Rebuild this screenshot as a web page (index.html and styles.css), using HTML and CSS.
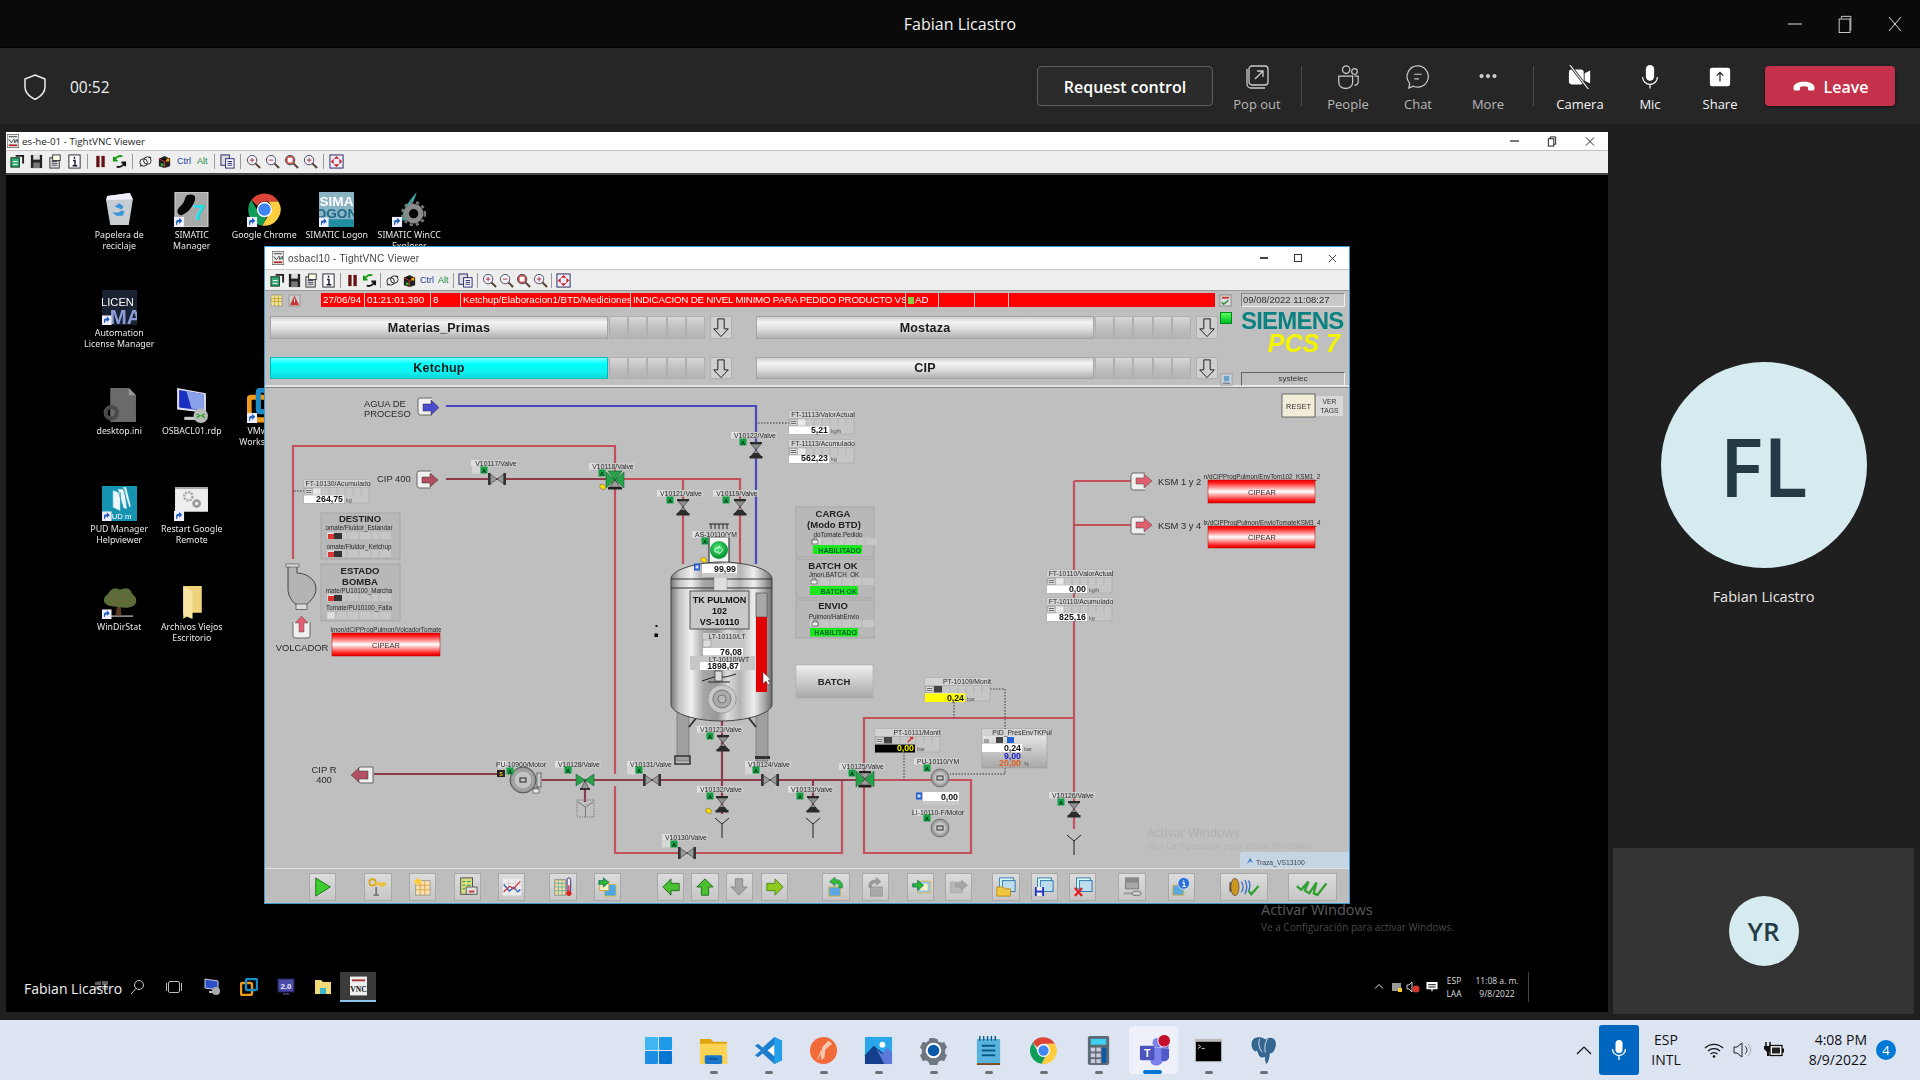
FILE: index.html
```html
<!DOCTYPE html>
<html lang="en">
<head>
<meta charset="utf-8">
<title>Fabian Licastro</title>
<link rel="stylesheet" href="styles.css">
</head>
<body>
<svg class="sprite" width="0" height="0" aria-hidden="true">
  <defs>
    <symbol id="chrome" viewBox="0 0 48 48">
      <path d="M24 2a22 22 0 0 1 19 11H24a11 11 0 0 0-10 6L6 11A22 22 0 0 1 24 2z" fill="#db4437"/>
      <path d="M6 11l9.500 16.500A11 11 0 0 0 27 34.600L21 46A22 22 0 0 1 6 11z" fill="#0f9d58"/>
      <path d="M43 13a22 22 0 0 1-22 33l10-17a11 11 0 0 0-2-15.900z" fill="#ffcd40"/>
      <circle cx="24" cy="24" r="10.500" fill="#fff"/><circle cx="24" cy="24" r="8.500" fill="#4285f4"/>
    </symbol>
    <symbol id="sc" viewBox="0 0 10 10">
      <rect width="10" height="10" fill="#eef"/><path d="M2 8V5q0-2 3-2V1l3 3-3 3V5q-2 0-2 3z" fill="#1f5fbf"/>
    </symbol>
    <symbol id="ti-m" viewBox="0 0 16 16"><rect x="1" y="4" width="9" height="10" fill="#3a7" stroke="#131"/><path d="M6 2h8v8" fill="none" stroke="#222" stroke-width="2"/><path d="M3 8h5M3 11h5" stroke="#fff"/></symbol>
    <symbol id="ti-s" viewBox="0 0 16 16"><rect x="2" y="1" width="12" height="14" fill="#222"/><rect x="4.500" y="1" width="7" height="5" fill="#ddd"/><rect x="4.500" y="9" width="7" height="6" fill="#777"/></symbol>
    <symbol id="ti-o" viewBox="0 0 16 16"><rect x="2" y="4" width="10" height="11" fill="#ddd" stroke="#333"/><rect x="5" y="1" width="8" height="6" fill="#ffe" stroke="#333"/><path d="M4 8h6M4 10h6M4 12h6" stroke="#446"/></symbol>
    <symbol id="ti-i" viewBox="0 0 16 16"><rect x="2" y="1" width="12" height="14" fill="#fff" stroke="#223"/><path d="M8 3v2M6.500 7H8.500v5M6 12.500h5" stroke="#113" stroke-width="1.500" fill="none"/></symbol>
    <symbol id="ti-p" viewBox="0 0 16 16"><rect x="3.500" y="2" width="3.500" height="12" fill="#611"/><rect x="9" y="2" width="3.500" height="12" fill="#611"/></symbol>
    <symbol id="ti-r" viewBox="0 0 16 16"><path d="M11 2.500a6 5 0 0 0-8 4M2 3v4h4" fill="none" stroke="#191" stroke-width="2"/><path d="M5 13.500a6 5 0 0 0 8-4M14 13V9h-4" fill="none" stroke="#111" stroke-width="2"/></symbol>
    <symbol id="ti-c" viewBox="0 0 16 16"><circle cx="6" cy="9" r="4" fill="#eee" stroke="#222"/><circle cx="10" cy="7" r="4" fill="none" stroke="#222"/><path d="M2 13l3-1M12 3l2 1" stroke="#222"/></symbol>
    <symbol id="ti-f" viewBox="0 0 16 16"><path d="M2 5l6-3 6 3v8l-6 2-6-2z" fill="#222"/><path d="M2 5l6 3 6-3M8 8v7" stroke="#c33"/><path d="M4 10h3v3H4z" fill="#3a3"/><path d="M10 5h3v3h-3z" fill="#ea0"/></symbol>
    <symbol id="ti-k" viewBox="0 0 16 16"><rect x="1" y="1" width="9" height="11" fill="#ddd" stroke="#226"/><rect x="6" y="5" width="9" height="10" fill="#fff" stroke="#226"/><path d="M8 8h5M8 10h5M8 12h5" stroke="#226"/></symbol>
    <symbol id="ti-z" viewBox="0 0 16 16"><circle cx="6.500" cy="6.500" r="5" fill="#f4f4ff" stroke="#445"/><path d="M10 10l5 5" stroke="#543" stroke-width="2.200"/><path d="M4 6.500h5M6.500 4v5" stroke="#a33"/></symbol>
    <symbol id="ti-z2" viewBox="0 0 16 16"><circle cx="6.500" cy="6.500" r="5" fill="#f4f4ff" stroke="#445"/><path d="M10 10l5 5" stroke="#543" stroke-width="2.200"/><path d="M4 6.500h5" stroke="#a33"/></symbol>
    <symbol id="ti-z3" viewBox="0 0 16 16"><circle cx="6.500" cy="6.500" r="5" fill="#c55" stroke="#445"/><path d="M10 10l5 5" stroke="#543" stroke-width="2.200"/><rect x="4" y="4" width="5" height="5" fill="#fff"/></symbol>
    <symbol id="ti-x" viewBox="0 0 16 16"><rect x="1" y="1" width="14" height="14" fill="#eef" stroke="#225"/><path d="M8 2l3 3H5zM8 14l3-3H5zM2 8l3-3v6zM14 8l-3-3v6z" fill="#c22"/></symbol>
  </defs>
</svg>

<header class="titlebar">
  <span class="title">Fabian Licastro</span>
  <div class="win-ctrls">
    <svg viewBox="0 0 16 16"><path d="M1 8h14" stroke="#ddd" fill="none"/></svg>
    <svg viewBox="0 0 16 20"><rect x="1.500" y="4.500" width="12" height="15" fill="none" stroke="#ddd"/><path d="M4 4V1.500h10.500V17H14" fill="none" stroke="#ddd"/></svg>
    <svg viewBox="0 0 16 16"><path d="M2 1l12 14M14 1L2 15" stroke="#ddd" fill="none"/></svg>
  </div>
</header>

<nav class="callbar">
  <svg class="shield" viewBox="0 0 24 26"><path d="M12 1l10 4v8c0 7-6 10.500-10 12.500C8 23.500 2 20 2 13V5z" fill="none" stroke="#eee" stroke-width="1.500"/></svg>
  <span class="timer">00:52</span>
  <button class="req">Request control</button>
  <div class="cb"><svg viewBox="0 0 24 24"><rect x="4" y="1" width="19" height="19" rx="3" fill="none" stroke="#ccc" stroke-width="1.300"/><path d="M2 4v15a4 4 0 0 0 4 4h14" fill="none" stroke="#ccc" stroke-width="1.300"/><path d="M10 14l8-8M12 6h6v6" fill="none" stroke="#ccc" stroke-width="1.300"/></svg><span>Pop out</span></div>
  <i class="sep"></i>
  <div class="cb"><svg viewBox="0 0 26 26"><circle cx="11" cy="5" r="4" fill="none" stroke="#ccc" stroke-width="1.300"/><circle cx="20" cy="7" r="3" fill="none" stroke="#ccc" stroke-width="1.300"/><path d="M3 12h15v7a7 6 0 0 1-15 0z" fill="none" stroke="#ccc" stroke-width="1.300"/><path d="M20 12h4v5a4 4 0 0 1-4 5" fill="none" stroke="#ccc" stroke-width="1.300"/></svg><span>People</span></div>
  <div class="cb"><svg viewBox="0 0 26 26"><path d="M13 1a11.500 11.500 0 1 1-5 22l-5 2 1-5A11.500 11.500 0 0 1 13 1z" fill="none" stroke="#ccc" stroke-width="1.300"/><path d="M9 10h8M9 15h5" stroke="#ccc" stroke-width="1.300"/></svg><span>Chat</span></div>
  <div class="cb"><svg viewBox="0 0 26 26"><circle cx="6" cy="12" r="2.300" fill="#ccc"/><circle cx="13" cy="12" r="2.300" fill="#ccc"/><circle cx="20" cy="12" r="2.300" fill="#ccc"/></svg><span>More</span></div>
  <i class="sep sep2"></i>
  <div class="cb on"><svg viewBox="0 0 26 26"><rect x="1" y="5" width="16" height="16" rx="3" fill="#fff"/><path d="M18 9l6-3v14l-6-3z" fill="#fff"/><path d="M2 0l20 26" stroke="#252525" stroke-width="3"/><path d="M2 0l20 26" stroke="#fff" stroke-width="1.200"/></svg><span>Camera</span></div>
  <div class="cb on"><svg viewBox="0 0 26 26"><rect x="8.500" y="0" width="9" height="17" rx="4.500" fill="#fff"/><path d="M5 13a8 8 0 0 0 16 0M13 21v4.500" fill="none" stroke="#fff" stroke-width="1.300"/></svg><span>Mic</span></div>
  <div class="cb on"><svg viewBox="0 0 26 26"><rect x="2" y="3" width="22" height="20" rx="2.500" fill="#fff"/><path d="M13 18V8M9.500 11.500L13 8l3.500 3.500" fill="none" stroke="#222" stroke-width="1.300"/></svg><span>Share</span></div>
  <button class="leave"><svg viewBox="0 0 26 16"><path d="M1 9c0-5 6-7 12-7s12 2 12 7c0 2-1 3-2 3h-4c-1 0-1.500-1-1.500-2V8c-3-1-6-1-9 0v2c0 1-.5 2-1.500 2H3c-1 0-2-1-2-3z" fill="#fff"/></svg>Leave</button>
</nav>

<main class="stage">
  <section class="share">
    <div class="vnc-title"><svg class="vnc-logo" viewBox="0 0 14 16"><rect width="14" height="16" fill="#eee" stroke="#333"/><path d="M2 3h10M2 6l3 4 3-4M9 6v4l3-4v4" stroke="#233" fill="none"/><path d="M2 13h10" stroke="#a22" stroke-width="2"/></svg><span>es-he-01 - TightVNC Viewer</span>
      <div class="vnc-ctrls"><i class="c-min"></i><svg viewBox="0 0 10 12"><rect x="1" y="3" width="6" height="8" fill="#fff" stroke="#111"/><path d="M3 3V1h6v8H7" fill="none" stroke="#111"/></svg><svg viewBox="0 0 10 10"><path d="M1 1l8 8M9 1l-8 8" stroke="#222" fill="none"/></svg></div>
    </div>
    <div class="vnc-tools outer">
      <svg class="ti"><use href="#ti-m"/></svg><svg class="ti"><use href="#ti-s"/></svg><svg class="ti"><use href="#ti-o"/></svg><svg class="ti"><use href="#ti-i"/></svg><i class="ts"></i>
      <svg class="ti"><use href="#ti-p"/></svg><svg class="ti"><use href="#ti-r"/></svg><i class="ts"></i>
      <svg class="ti"><use href="#ti-c"/></svg><svg class="ti"><use href="#ti-f"/></svg><b class="ctrl">Ctrl</b><b class="alt">Alt</b><i class="ts"></i>
      <svg class="ti"><use href="#ti-k"/></svg><i class="ts"></i>
      <svg class="ti"><use href="#ti-z"/></svg><svg class="ti"><use href="#ti-z2"/></svg><svg class="ti"><use href="#ti-z3"/></svg><svg class="ti"><use href="#ti-z"/></svg><i class="ts"></i>
      <svg class="ti"><use href="#ti-x"/></svg>
    </div>
    <div class="desktop">
      <div class="icons">
        <div class="di"><svg viewBox="0 0 34 34"><path d="M5 4l22-3 3 6-4 25H8L4 8z" fill="#c8cdd2"/><path d="M5 4l22-3 3 6-26 1z" fill="#eef"/><path d="M12 14l5-3 4 3-2 3zM10 20l4 3h6l2-4-3-1-3 2z" fill="#3a95d8"/></svg><span>Papelera de<br>reciclaje</span></div>
        <div class="di"><svg viewBox="0 0 34 34"><rect x="1" y="0" width="32" height="34" fill="#a9a9a9" stroke="#ddd"/><path d="M13 3c6-2 9 1 7 6s-5 9-8 11-6 4-8 1 1-6 4-9 2-7 5-9z" fill="#050505"/><text class="seven" x="24" y="27">7</text><use href="#sc" x="0" y="24" width="10" height="10"/></svg><span>SIMATIC<br>Manager</span></div>
        <div class="di"><svg viewBox="0 0 34 34"><use href="#chrome" width="34" height="34"/><use href="#sc" x="0" y="24" width="10" height="10"/></svg><span>Google Chrome</span></div>
        <div class="di"><svg viewBox="0 0 36 36"><rect width="36" height="36" fill="#8ab4c4"/><rect y="28" width="36" height="8" fill="#1f8fa0"/><text class="sl" x="18" y="14">SIMA</text><text class="sl sl2" x="18" y="27">OGON</text><use href="#sc" x="0" y="26" width="10" height="10"/></svg><span>SIMATIC Logon</span></div>
        <div class="di"><svg viewBox="0 0 34 34"><path d="M24 0c-6 8-15 16-14 28 3-1 5-1 6 0-2-10 6-18 8-28z" fill="#3da4a8"/><circle cx="21" cy="21" r="7" fill="none" stroke="#8a8a8a" stroke-width="5"/><circle cx="21" cy="21" r="11" fill="none" stroke="#777" stroke-width="2.500" stroke-dasharray="3 3"/><use href="#sc" x="0" y="24" width="10" height="10"/></svg><span>SIMATIC WinCC<br>Explorer</span></div>

        <div class="di"><svg viewBox="0 0 36 36"><rect width="36" height="36" fill="#1a2130"/><text class="lic" x="-1" y="16">LICEN</text><text class="lic2" x="8" y="35">MA</text><use href="#sc" x="0" y="26" width="10" height="10"/></svg><span>Automation<br>License Manager</span></div>
        <div></div><div></div><div></div><div></div>

        <div class="di"><svg viewBox="0 0 34 34"><path d="M8 0h18l7 7v26H8z" fill="#6a6a6a"/><path d="M26 0l7 7h-7z" fill="#999"/><circle cx="9" cy="24" r="5.500" fill="none" stroke="#4a4a4a" stroke-width="4"/></svg><span>desktop.ini</span></div>
        <div class="di"><svg viewBox="0 0 34 34"><path d="M3 0l28 5v19L3 21z" fill="#dde"/><path d="M5 2l24 4v16L5 19z" fill="#1a30c0"/><path d="M12 3l17 3v16l-12-2z" fill="#8aa0e8"/><path d="M10 28h14v3H10z" fill="#ccc"/><circle cx="26" cy="27" r="7" fill="#bbb"/><path d="M22 25l3 2-3 2M30 25l-3 2 3 2" stroke="#2a2" fill="none" stroke-width="1.300"/></svg><span>OSBACL01.rdp</span></div>
        <div class="di"><svg viewBox="0 0 34 34"><rect x="2" y="9" width="22" height="22" rx="2" fill="none" stroke="#f09a1a" stroke-width="5"/><rect x="11" y="2" width="21" height="21" rx="2" fill="none" stroke="#1a8cc8" stroke-width="5"/><use href="#sc" x="0" y="24" width="10" height="10"/></svg><span>VMware<br>Workstation</span></div>
        <div></div><div></div>

        <div class="di"><svg viewBox="0 0 36 36"><rect width="36" height="36" fill="#1793b2"/><path d="M11 4v18l8 4V7zM16 3l6 20 4 1-3-21zM21 1l7 21 2-1-5-20z" fill="#eaf6f8" stroke="#1793b2" stroke-width=".7"/><text class="pud" x="10" y="34">UD m</text><use href="#sc" x="0" y="26" width="10" height="10"/></svg><span>PUD Manager<br>Helpviewer</span></div>
        <div class="di"><svg viewBox="0 0 34 34"><rect x="1" y="1" width="32" height="24" fill="#eee"/><rect x="1" y="1" width="32" height="2" fill="#aaa"/><circle cx="14" cy="10" r="4" fill="none" stroke="#aaa" stroke-width="2.500" stroke-dasharray="2 1"/><circle cx="22" cy="17" r="3" fill="none" stroke="#999" stroke-width="2.500"/><use href="#sc" x="0" y="24" width="10" height="10"/></svg><span>Restart Google<br>Remote</span></div>
        <div></div><div></div><div></div>

        <div class="di"><svg viewBox="0 0 36 36"><path d="M16 20l-2 12h6l-1-12z" fill="#5a3b22"/><path d="M2 18c0-6 3-6 5-9s5-6 9-4 7-2 11 0 3 5 6 7 3 8 0 10-9 3-14 2-14 0-17-6z" fill="#5a6d38"/><path d="M8 14l1 1M14 10l1 1M22 12l1 1M26 18l1 1M12 20l1 1M18 17l1 1" stroke="#b44" stroke-width="1.500"/><path d="M4 33h28" stroke="#eee"/><use href="#sc" x="0" y="26" width="10" height="10"/></svg><span>WinDirStat</span></div>
        <div class="di"><svg viewBox="0 0 34 34"><path d="M9 2h18v26H18l-9 6z" fill="#f0d27a"/><path d="M9 2l9 5v27l-9-4z" fill="#f7e3a2"/></svg><span>Archivos Viejos<br>Escritorio</span></div>
      </div>

      <div class="remote-bar">
        <svg class="r-start" viewBox="0 0 13 9"><path d="M0 1l6-1v4H0zM7 0l6-.5V4H7zM0 5h6v4l-6-.5zM7 5h6v4l-6-.5z" fill="#5c5c5c"/></svg>
        <span class="overlay-name">Fabian Licastro</span>
        <svg class="rb r-search" viewBox="0 0 16 16"><circle cx="10" cy="6" r="4.500" fill="none" stroke="#ccc"/><path d="M7 9.500L2 15" stroke="#ccc"/></svg>
        <svg class="rb r-view" viewBox="0 0 16 14"><rect x="2.500" y="1.500" width="11" height="11" rx="1.500" fill="none" stroke="#bbb"/><path d="M.5 3v8M15.500 3v8" stroke="#bbb"/></svg>
        <svg class="rb r-a r-first" viewBox="0 0 18 18"><path d="M2 1l13 2v9L2 10z" fill="#2a50c8" stroke="#ccd"/><path d="M6 13h7v2H6z" fill="#bbb"/><circle cx="13" cy="13" r="4" fill="#aaa"/></svg>
        <svg class="rb r-a" viewBox="0 0 18 18"><rect x="1" y="5" width="11" height="12" rx="1.500" fill="none" stroke="#f09a1a" stroke-width="2.400"/><rect x="6" y="1" width="11" height="11" rx="1.500" fill="none" stroke="#1a8cc8" stroke-width="2.400"/></svg>
        <svg class="rb r-a" viewBox="0 0 18 18"><rect x="1" y="1" width="16" height="13" fill="#4a4aa8" stroke="#225"/><text class="v20" x="9" y="11">2.0</text><path d="M6 16h6" stroke="#335" stroke-width="2"/></svg>
        <svg class="rb r-a" viewBox="0 0 18 18"><path d="M1 2h6l2 2h8v12H1z" fill="#f3da78"/><rect x="6" y="10" width="6" height="6" fill="#38b6c8"/></svg>
        <div class="rb-active"><svg viewBox="0 0 18 20"><rect width="18" height="20" fill="#eee"/><path d="M2 4h14" stroke="#a33" stroke-width="2"/><text class="vn" x="9" y="16">VNC</text></svg></div>
        <div class="r-tray">
          <svg class="rt" viewBox="0 0 10 6"><path d="M1 5l4-4 4 4" fill="none" stroke="#ddd"/></svg>
          <svg class="rt rt-a" viewBox="0 0 12 12"><rect x="1" y="2" width="9" height="8" fill="#999"/><rect x="7" y="7" width="4" height="4" fill="#fc3"/></svg>
          <svg class="rt rt-b" viewBox="0 0 14 12"><path d="M1 4h2l3-3v10L3 8H1z" fill="none" stroke="#ccc"/><circle cx="10" cy="8" r="3.500" fill="#d33"/></svg>
          <svg class="rt rt-c" viewBox="0 0 14 13"><path d="M1 1h12v8H8l-1 3-1-3H1z" fill="#fff"/><path d="M3 4h8M3 6.500h8" stroke="#000"/></svg>
          <span class="r-lang">ESP<br>LAA</span>
          <span class="r-time">11:08 a. m.<br>9/8/2022</span>
          <i class="r-line"></i>
        </div>
      </div>

      <div class="watermark"><strong>Activar Windows</strong><span>Ve a Configuración para activar Windows.</span></div>

      <article class="hmi">
        <div class="hmi-title"><svg class="vnc-logo" viewBox="0 0 14 16"><rect width="14" height="16" fill="#eee" stroke="#333"/><path d="M2 3h10M2 6l3 4 3-4M9 6v4l3-4v4" stroke="#233" fill="none"/><path d="M2 13h10" stroke="#a22" stroke-width="2"/></svg><span>osbacl10 - TightVNC Viewer</span>
          <div class="hmi-ctrls"><i class="c-min"></i><i class="c-max"></i><svg viewBox="0 0 10 10"><path d="M1 1l8 8M9 1l-8 8" stroke="#222" fill="none"/></svg></div>
        </div>
        <div class="vnc-tools inner">
          <svg class="ti"><use href="#ti-m"/></svg><svg class="ti"><use href="#ti-s"/></svg><svg class="ti"><use href="#ti-o"/></svg><svg class="ti"><use href="#ti-i"/></svg><i class="ts"></i>
          <svg class="ti"><use href="#ti-p"/></svg><svg class="ti"><use href="#ti-r"/></svg><i class="ts"></i>
          <svg class="ti"><use href="#ti-c"/></svg><svg class="ti"><use href="#ti-f"/></svg><b class="ctrl">Ctrl</b><b class="alt">Alt</b><i class="ts"></i>
          <svg class="ti"><use href="#ti-k"/></svg><i class="ts"></i>
          <svg class="ti"><use href="#ti-z"/></svg><svg class="ti"><use href="#ti-z2"/></svg><svg class="ti"><use href="#ti-z3"/></svg><svg class="ti"><use href="#ti-z"/></svg><i class="ts"></i>
          <svg class="ti"><use href="#ti-x"/></svg>
        </div>

        <div class="hmi-head">
          <div class="hmi-left">
            <div class="alarm-row">
              <svg class="mini" viewBox="0 0 14 14"><rect x="1" y="1" width="12" height="12" fill="#eee8a0" stroke="#999"/><path d="M1 5h12M1 8h12M5 1v12M9 1v12" stroke="#c8a030"/></svg>
              <svg class="mini" viewBox="0 0 14 14"><rect x="1" y="1" width="12" height="12" fill="#ccc" stroke="#999"/><path d="M7 2l5 10H2z" fill="#c33"/><path d="M7 5v4" stroke="#fff"/></svg>
              <div class="alarm-bar">
                <span class="c1">27/06/94</span><span class="c2">01:21:01,390</span><span class="c3">8</span><span class="c4">Ketchup/Elaboracion1/BTD/Mediciones</span><span class="c5">INDICACION DE NIVEL MINIMO PARA PEDIDO PRODUCTO VS</span><span class="c6"><i class="ad"></i>AD</span><span class="c7"></span><span class="c8"></span><span class="c9"></span>
              </div>
              <svg class="mini mini-r" viewBox="0 0 14 14"><rect x="1" y="1" width="12" height="12" fill="#ddd" stroke="#888"/><path d="M3 4h8" stroke="#c33" stroke-width="2"/><path d="M3 9l2 2 5-4" stroke="#283" stroke-width="1.500" fill="none"/></svg>
            </div>
            <div class="area-row first">
              <div class="area"><span class="area-name">Materias_Primas</span><div class="sqs"><i></i><i></i><i></i><i></i><i></i></div><div class="down"><svg viewBox="0 0 22 23"><path d="M7.500 2h7v11H19l-8 8.500L3 13h4.500z" fill="none" stroke="#222" stroke-width="1.100"/></svg></div></div>
              <div class="area"><span class="area-name">Mostaza</span><div class="sqs"><i></i><i></i><i></i><i></i><i></i></div><div class="down"><svg viewBox="0 0 22 23"><path d="M7.500 2h7v11H19l-8 8.500L3 13h4.500z" fill="none" stroke="#222" stroke-width="1.100"/></svg></div></div>
              <i class="led"></i>
            </div>
            <div class="area-row">
              <div class="area"><span class="area-name active">Ketchup</span><div class="sqs"><i></i><i></i><i></i><i></i><i></i></div><div class="down"><svg viewBox="0 0 22 23"><path d="M7.500 2h7v11H19l-8 8.500L3 13h4.500z" fill="none" stroke="#222" stroke-width="1.100"/></svg></div></div>
              <div class="area"><span class="area-name">CIP</span><div class="sqs"><i></i><i></i><i></i><i></i><i></i></div><div class="down"><svg viewBox="0 0 22 23"><path d="M7.500 2h7v11H19l-8 8.500L3 13h4.500z" fill="none" stroke="#222" stroke-width="1.100"/></svg></div></div>
              <svg class="mini mini-low" viewBox="0 0 14 14"><rect x="1" y="1" width="12" height="12" fill="#cfd8e0" stroke="#999"/><rect x="4" y="3" width="6" height="6" fill="#6aa0c8"/><path d="M3 11h8" stroke="#556"/></svg>
            </div>
          </div>
          <div class="hmi-side">
            <div class="datebox">09/08/2022 11:08:27</div>
            <div class="siemens">SIEMENS</div>
            <div class="pcs">PCS 7</div>
            <div class="userbox">systelec</div>
          </div>
        </div>

        <svg class="canvas" viewBox="265 389 1084 480" width="1084" height="480">
          <defs>
            <linearGradient id="metal"><stop offset="0" stop-color="#777"/><stop offset=".08" stop-color="#c4c4c4"/><stop offset=".2" stop-color="#f0f0f0"/><stop offset=".32" stop-color="#a8a8a8"/><stop offset=".46" stop-color="#979797"/><stop offset=".56" stop-color="#dedede"/><stop offset=".68" stop-color="#b4b4b4"/><stop offset=".82" stop-color="#eee"/><stop offset=".93" stop-color="#a4a4a4"/><stop offset="1" stop-color="#6a6a6a"/></linearGradient>
            <linearGradient id="rb" x2="0" y2="1"><stop offset="0" stop-color="#e00"/><stop offset=".1" stop-color="#f11"/><stop offset=".5" stop-color="#fff"/><stop offset=".9" stop-color="#f11"/><stop offset="1" stop-color="#d00"/></linearGradient>
            <linearGradient id="btn" x2="0" y2="1"><stop offset="0" stop-color="#f0f0f0"/><stop offset="1" stop-color="#a8a8a8"/></linearGradient>
            <radialGradient id="mot"><stop offset=".5" stop-color="#c8c8c8"/><stop offset="1" stop-color="#8a8a8a"/></radialGradient>
            <radialGradient id="grn" cx=".45" cy=".4"><stop offset="0" stop-color="#55f07a"/><stop offset="1" stop-color="#0a9a38"/></radialGradient>
            <g id="hg"><path d="M-5-6H5L0 0 5 6H-5L0 0Z" fill="#8e8e8e" stroke="#333" stroke-width=".6"/><path d="M-2.500 3H2.500L5 6H-5Z" fill="#2c2c2c"/><rect x="-6" y="-8" width="12" height="2" fill="#2a2a2a"/><rect x="-6.500" y="6" width="13" height="2.500" fill="#2a2a2a"/></g>
            <g id="bt"><path d="M-7-5V5L0 0 7 5V-5L0 0Z" fill="#9a9a9a" stroke="#333" stroke-width=".6"/><rect x="-9" y="-6" width="2.500" height="12" fill="#333"/><rect x="6.500" y="-6" width="2.500" height="12" fill="#333"/></g>
            <g id="gv"><path d="M-9-8V8L0 0 9 8V-8L0 0Z" fill="#27a14a" stroke="#0a5a22" stroke-width=".5"/><path d="M-5-6H5L0 0 5 6H-5L0 0Z" fill="#9e9e9e" stroke="#333" stroke-width=".6"/><rect x="-6" y="-8" width="12" height="2" fill="#222"/><rect x="-6.500" y="6" width="13" height="2.500" fill="#222"/></g>
            <g id="gv2"><path d="M-9-8V8L0 0 9 8V-8L0 0Z" fill="#27a14a" stroke="#0a5a22" stroke-width=".5"/><path d="M-7-9H7L0 0Z" fill="#27a14a" stroke="#0a5a22" stroke-width=".5"/><path d="M-5 7H5L0 0Z" fill="#9e9e9e" stroke="#333" stroke-width=".6"/><rect x="-7" y="7" width="14" height="2.500" fill="#222"/></g>
            <g id="gb"><path d="M-9-6V6L0 0 9 6V-6L0 0Z" fill="#27a14a" stroke="#0a5a22" stroke-width=".5"/><path d="M-4 9h8l-4-8z" fill="#999" stroke="#333" stroke-width=".6"/><rect x="-5" y="8" width="10" height="2" fill="#333"/></g>
            <g id="a"><rect x="-3.500" y="-3.500" width="7" height="7" fill="#12a040"/><text class="ga" y="2.500">A</text></g>
            <g id="lb"><rect width="46" height="6.500" fill="#cbcbcb"/><rect width="8" height="6.500" fill="#dedede"/></g>
            <g id="lbx"><rect y="7" width="8" height="6.500" fill="#d6d6d6"/></g>
            <g id="fp"><rect width="65" height="23" fill="#c6c6c6" stroke="#a8a8a8" stroke-width=".7"/><rect width="65" height="7" fill="#d2d2d2"/><path d="M0 7.500H65" stroke="#aaa" stroke-width=".6"/><rect x="1" y="8.500" width="7" height="6" fill="#e0e0e0" stroke="#777" stroke-width=".4"/><rect x="9" y="8.500" width="8" height="6" fill="#e8e8e8"/><path d="M25 8v7M33 8v7M41 8v7M49 8v7M57 8v7M17 8v7" stroke="#aaa" stroke-width=".6"/><path d="M2 10.500h5M2 12.500h5" stroke="#333" stroke-width=".7"/><rect y="15.500" width="40" height="7.500" fill="#fff"/></g>
            <g id="cells"><rect width="64" height="7" fill="#c6c6c6"/><path d="M9 0v7M20 0v7M32 0v7M44 0v7M52 0v7" stroke="#aaa" stroke-width=".6"/><rect x=".5" y=".5" width="7" height="6" fill="#e0e0e0"/></g>
            <g id="yy"><path d="M0 14V0M-7-6L0 0 7-6" fill="none" stroke="#222" stroke-width="1"/></g>
            <g id="mt"><circle r="9" fill="url(#mot)" stroke="#666" stroke-width=".8"/><rect x="-3" y="-2" width="6" height="4" fill="none" stroke="#222" stroke-width=".9"/></g>
            <g id="hand"><path d="M-3-2l3-1 3 3-2 3-4-2z" fill="#ffe000" stroke="#654" stroke-width=".5"/></g>
            <g id="bi"><rect x="-3" y="-3.500" width="6" height="7" fill="#1f5fd0"/><rect x="-1.500" y="-1.500" width="3" height="3" fill="#dde"/></g>
            <g id="lk"><rect x="-3" y="-1" width="6" height="4" fill="#eee" stroke="#333" stroke-width=".6"/><path d="M-2-1a2 2 0 0 1 4 0" fill="none" stroke="#333" stroke-width=".6"/></g>
            <g id="box"><path d="M14 0H2.500Q0 0 0 2.500V14.500Q0 17 2.500 17H14" fill="#f0f0f0" stroke="#666" stroke-width="1"/></g>
          </defs>

          <!-- pipes -->
          <path class="p-blue" d="M446 407H756V565"/>
          <path class="p-red" d="M293 560V447H615V775M615 787V854H842V781"/>
          <path class="p-dark" d="M446 480H615"/>
          <path class="p-red" d="M615 480H740V565M683 480V565"/>
          <path class="p-dark" d="M374 775H499"/>
          <path class="p-dark" d="M542 781H864"/>
          <path class="p-red" d="M864 781H971V854H864V719H1074M1074 482V830M1074 482H1132M1074 526H1132"/>
          <path class="p-dark" d="M722 722V815M813 781V812M585 781V803"/>

          <!-- dotted links -->
          <path class="dots" d="M294 492H304M758 424H789M990 690H1005V730M954 703V719M904 753V781M1005 769V775H950"/>

          <!-- inlets / outlets -->
          <text class="lbl" x="364" y="408">AGUA DE</text><text class="lbl" x="364" y="418">PROCESO</text>
          <use href="#box" x="418" y="399"/><path d="M423 405h8v-4l8 7.500-8 7.500v-4h-8z" fill="#4a4ad0" stroke="#333" stroke-width=".5"/>
          <text class="lbl" x="377" y="483">CIP 400</text>
          <use href="#box" x="417" y="472"/><path d="M422 478h8v-4l8 7-8 7v-4h-8z" fill="#b05060" stroke="#333" stroke-width=".5"/>
          <text class="lbl mid" x="324" y="774">CIP R</text><text class="lbl mid" x="324" y="784">400</text>
          <path d="M373 768H361Q358 768 358 771V781Q358 784 361 784H373Z" fill="#f0f0f0" stroke="#666"/><path d="M368 772h-9v-3l-8 7 8 7v-3h9z" fill="#b05060" stroke="#333" stroke-width=".5"/>
          <use href="#box" x="1131" y="474"/><path d="M1136 479h8v-4l8 7-8 7v-4h-8z" fill="#e06070" stroke="#444" stroke-width=".5"/><text class="lbl" x="1158" y="486">KSM 1 y 2</text>
          <use href="#box" x="1131" y="518"/><path d="M1136 523h8v-4l8 7-8 7v-4h-8z" fill="#e06070" stroke="#444" stroke-width=".5"/><text class="lbl" x="1158" y="530">KSM 3 y 4</text>

          <!-- valves -->
          <use href="#lb" x="471" y="461"/><use href="#lbx" x="472" y="461"/><text class="tg" x="496" y="466.500">V10117/Valve</text><use href="#a" x="484" y="471"/><use href="#bt" x="497" y="480"/>
          <use href="#lb" x="589" y="464"/><text class="tg" x="613" y="469.500">V10118/Valve</text><use href="#a" x="602" y="474"/><use href="#gv2" x="615" y="481"/><use href="#hand" x="603" y="488"/>
          <use href="#lb" x="657" y="491"/><text class="tg" x="681" y="496.500">V10121/Valve</text><use href="#a" x="670" y="501"/><use href="#hg" x="683" y="508"/>
          <use href="#lb" x="713" y="491"/><text class="tg" x="737" y="496.500">V10119/Valve</text><use href="#a" x="726" y="501"/><use href="#hg" x="740" y="508"/>
          <use href="#lb" x="731" y="433"/><text class="tg" x="755" y="438.500">V10122/Valve</text><use href="#a" x="743" y="443"/><use href="#hg" x="756" y="451"/>
          <use href="#lb" x="697" y="727"/><text class="tg" x="721" y="732.500">V10123/Valve</text><use href="#a" x="710" y="737"/><use href="#hg" x="723" y="744"/>
          <use href="#lb" x="555" y="762"/><text class="tg" x="579" y="767.500">V10128/Valve</text><use href="#a" x="568" y="771"/>
          <rect class="dbox" x="577" y="801" width="17" height="17"/><path d="M585.500 818V808M578 803l7.500 5 7.500-5" fill="none" stroke="#666" stroke-width=".8"/><use href="#gb" x="585" y="781"/>
          <use href="#lb" x="627" y="762"/><use href="#lbx" x="627" y="762"/><text class="tg" x="651" y="767.500">V10131/Valve</text><use href="#a" x="639" y="771"/><use href="#bt" x="652" y="781"/>
          <use href="#lb" x="745" y="762"/><use href="#lbx" x="745" y="762"/><text class="tg" x="769" y="767.500">V10124/Valve</text><use href="#a" x="756" y="771"/><use href="#bt" x="770" y="781"/>
          <use href="#lb" x="697" y="787"/><text class="tg" x="721" y="792.500">V10132/Valve</text><use href="#a" x="710" y="797"/><use href="#hg" x="722" y="805"/><use href="#hand" x="709" y="812"/><use href="#yy" x="722" y="825"/>
          <use href="#lb" x="788" y="787"/><text class="tg" x="812" y="792.500">V10133/Valve</text><use href="#a" x="800" y="797"/><use href="#hg" x="813" y="805"/><use href="#yy" x="813" y="825"/>
          <use href="#lb" x="662" y="835"/><use href="#lbx" x="662" y="835"/><text class="tg" x="686" y="840.500">V10130/Valve</text><use href="#a" x="674" y="845"/><use href="#bt" x="687" y="854"/>
          <use href="#lb" x="839" y="764"/><text class="tg" x="863" y="769.500">V10125/Valve</text><use href="#a" x="852" y="774"/><use href="#gv" x="865" y="780"/>
          <use href="#lb" x="1049" y="793"/><text class="tg" x="1073" y="798.500">V10126/Valve</text><use href="#a" x="1061" y="803"/><use href="#hg" x="1074" y="810"/><use href="#yy" x="1074" y="842"/>

          <!-- motors -->
          <use href="#lb" x="914" y="759"/><text class="tg" x="938" y="764.500">PU-10110/YM</text><use href="#a" x="927" y="769"/><use href="#mt" x="940" y="779"/>
          <use href="#bi" x="919" y="797"/><rect x="923" y="793" width="36" height="9" fill="#fff"/><rect x="923" y="802" width="36" height="4" fill="#c8c8c8"/><text class="val" x="958" y="801">0,00</text>
          <use href="#lb" x="914" y="810"/><text class="tg" x="938" y="815.500">LI-10110-F/Motor</text><use href="#a" x="927" y="819"/><use href="#mt" x="940" y="829"/>
          <use href="#lb" x="498" y="762"/><text class="tg" x="521" y="767.500">PU-10900/Motor</text>
          <circle cx="523" cy="781" r="13" fill="url(#mot)" stroke="#555"/><circle cx="523" cy="781" r="9" fill="#c4c4c4" stroke="#777" stroke-width=".6"/><rect x="520" y="779" width="6" height="4" fill="none" stroke="#222"/><rect x="537" y="774" width="4" height="14" fill="#ccc" stroke="#444" stroke-width=".7"/><rect x="497" y="771" width="8" height="7" fill="#222"/><text class="ga ga-y" x="501" y="777">S</text><use href="#a" x="510" y="772"/><use href="#lk" x="536" y="791"/>

          <!-- faceplates -->
          <use href="#fp" x="304" y="481"/><text class="tg" x="338" y="487">FT-10130/Acumulado</text><text class="val" x="343" y="502.500">264,75</text><text class="unit" x="346" y="502.500">kg</text>
          <use href="#fp" x="789" y="412"/><text class="tg" x="823" y="418">FT-11113/ValorActual</text><text class="val" x="828" y="433.500">5,21</text><text class="unit" x="831" y="433.500">kg/h</text>
          <use href="#fp" x="789" y="441"/><text class="tg" x="823" y="447">FT-11113/Acumulado</text><text class="val" x="828" y="462">562,23</text><text class="unit" x="831" y="462">kg</text>
          <use href="#fp" x="1047" y="571"/><text class="tg" x="1081" y="577">FT-10110/ValorActual</text><text class="val" x="1086" y="592.500">0,00</text><text class="unit" x="1089" y="592.500">kg/h</text>
          <use href="#fp" x="1047" y="599"/><text class="tg" x="1081" y="605">FT-10110/Acumulado</text><text class="val" x="1086" y="620.500">825,16</text><text class="unit" x="1089" y="620.500">kg</text>
          <use href="#fp" x="925" y="679"/><text class="tg" x="967" y="685">PT-10109/Monit</text><rect x="925" y="694.500" width="40" height="8.500" fill="#ff0"/><rect x="934" y="687" width="8" height="6.500" fill="#444"/><text class="val" x="964" y="701.500">0,24</text><text class="unit" x="967" y="701.500">bar</text>
          <use href="#fp" x="875" y="730"/><text class="tg" x="917" y="736">PT-10111/Monit</text><rect x="875" y="745.500" width="40" height="8" fill="#000"/><rect x="884" y="738" width="8" height="6.500" fill="#444"/><path d="M908 743l5-5M910 738l3 2" stroke="#d22" stroke-width="1.300"/><text class="val val-y" x="914" y="752">0,00</text><text class="unit" x="917" y="752">bar</text>

          <!-- PID -->
          <rect x="982" y="730" width="65" height="39" fill="url(#btn)" stroke="#999" stroke-width=".6"/><rect x="982" y="730" width="65" height="7" fill="#d2d2d2"/><text class="tg" x="1022" y="736">PID_PresEnvTKPul</text><path d="M984 741h5M984 743h5" stroke="#333" stroke-width=".7"/><rect x="996" y="738" width="7" height="6" fill="#444"/><rect x="1007" y="738" width="7" height="6" fill="#1f5fd0"/><rect x="982" y="745" width="40" height="8" fill="#fff"/><text class="val" x="1021" y="752">0,24</text><text class="unit" x="1024" y="752">bar</text><text class="val val-b" x="1021" y="759.500">9,00</text><text class="val val-o" x="1021" y="767">20,00</text><text class="unit" x="1024" y="767">%</text>

          <!-- destino / bomba -->
          <rect class="panel" x="321" y="514" width="79" height="46"/><text class="ph" x="360" y="522.500">DESTINO</text>
          <use href="#cells" x="327" y="533"/><text class="tg sm" x="359" y="531">omate/Fluidor_Estandar</text><rect x="328" y="535" width="6" height="5" fill="#d33"/><rect x="334" y="534" width="8" height="6" fill="#333"/>
          <use href="#cells" x="327" y="551"/><text class="tg sm" x="359" y="549.500">omate/Fluidor_Ketchup</text><rect x="328" y="553" width="6" height="5" fill="#d33"/><rect x="334" y="552" width="8" height="6" fill="#333"/>
          <rect class="panel" x="321" y="565" width="79" height="57"/><text class="ph" x="360" y="574.500">ESTADO</text><text class="ph" x="360" y="585.500">BOMBA</text>
          <use href="#cells" x="327" y="595"/><text class="tg sm" x="359" y="594">mate/PU10100_Marcha</text><rect x="328" y="597" width="6" height="5" fill="#d33"/><rect x="334" y="596" width="8" height="6" fill="#333"/>
          <use href="#cells" x="327" y="613"/><text class="tg sm" x="359" y="611">Tomate/PU10100_Falla</text>

          <!-- bomba icon / volcador -->
          <path d="M288 566H297V574C303 574 316 578 316 590C316 598 308 604 306 606H297C292 603 288 597 288 590Z" fill="#b4b4b4" stroke="#444"/><rect x="296" y="605" width="11" height="5.500" fill="#ddd" stroke="#444" stroke-width=".7"/><rect x="286" y="565" width="13" height="3" fill="#ddd" stroke="#444" stroke-width=".6"/>
          <path d="M293 623V637Q293 639 296 639H307Q310 639 310 637V623" fill="#f0f0f0" stroke="#666"/><path d="M299 633v-9h-4l6.500-7 6.500 7h-4v9z" fill="#e06070" stroke="#555" stroke-width=".5"/>
          <text class="lbl mid" x="302" y="652">VOLCADOR</text>
          <text class="tg sm" x="386" y="632.500">lmon/dCIPProgPulmon/VolcadorTomate</text>
          <rect class="cip" x="332" y="634" width="108" height="23"/><text class="tx" x="386" y="648.500">CIPEAR</text>

          <text class="tg sm" x="1262" y="480">n/dCIPProgPulmon/EnvTom102_KSM1_2</text>
          <rect class="cip" x="1208" y="481" width="107" height="23"/><text class="tx" x="1262" y="496">CIPEAR</text>
          <text class="tg sm" x="1262" y="526">lx/dCIPProgPulmon/EnvioTomateKSM3_4</text>
          <rect class="cip" x="1208" y="527" width="107" height="22"/><text class="tx" x="1262" y="541">CIPEAR</text>

          <rect x="1282" y="395" width="33" height="23" fill="#f0ecd8" stroke="#222" stroke-width=".6"/><text class="tx" x="1298.500" y="410">RESET</text>
          <rect x="1316" y="397" width="27" height="20" fill="#d8d8d8"/><text class="tx sm7" x="1329.500" y="405">VER</text><text class="tx sm7" x="1329.500" y="414">TAGS</text>

          <!-- carga -->
          <rect class="panel" x="796" y="508" width="78" height="50"/><text class="ph" x="833" y="517.500">CARGA</text><text class="ph" x="834" y="528.500">(Modo BTD)</text>
          <text class="tg sm" x="838" y="537.500">doTomate.Pedido</text><use href="#cells" x="813" y="539"/><use href="#lk" x="815" y="542"/><rect x="813" y="546" width="49" height="9" fill="#1ce61c"/><text class="ok" x="861" y="553.500">HABILITADO</text>
          <rect class="panel" x="796" y="560" width="78" height="39"/><text class="ph" x="833" y="569.500">BATCH OK</text>
          <text class="tg sm" x="834" y="578">Jmon.BATCH_OK</text><use href="#cells" x="810" y="579"/><use href="#lk" x="814" y="582"/><rect x="810" y="587" width="48" height="9" fill="#1ce61c"/><text class="ok" x="857" y="594.500">BATCH OK</text>
          <rect class="panel" x="796" y="601" width="78" height="38"/><text class="ph" x="833" y="609.500">ENVIO</text>
          <text class="tg sm" x="834" y="619.500">Pulmon/HabEnvio</text><use href="#cells" x="810" y="621"/><use href="#lk" x="815" y="624"/><rect x="810" y="629" width="48" height="8.500" fill="#1ce61c"/><text class="ok" x="857" y="636">HABILITADO</text>
          <rect x="796" y="666" width="77" height="33" fill="url(#btn)" stroke="#aaa" stroke-width=".6"/><text class="batch" x="834" y="686">BATCH</text>

          <!-- agitator -->
          <path d="M709 525h20M711 525v5M715 525v5M719 525v5M723 525v5M727 525v5" stroke="#222" fill="none"/>
          <rect x="709" y="538" width="20" height="27" fill="#f4f4f4" stroke="#111"/>
          <use href="#lb" x="692" y="532"/><text class="tg" x="716" y="537.500">AS-10110/YM</text><use href="#a" x="705" y="542"/>
          <circle cx="719" cy="551" r="9" fill="url(#grn)"/><path d="M715 549h4v-2l4 4-4 4v-2h-4z" fill="none" stroke="#fff" stroke-width=".8"/>

          <!-- tank -->
          <rect x="677" y="712" width="12" height="50" fill="#a0a0a0" stroke="#666" stroke-width=".6"/><rect x="756" y="712" width="12" height="50" fill="#a0a0a0" stroke="#666" stroke-width=".6"/>
          <rect x="675" y="757" width="15" height="8" fill="none" stroke="#333" stroke-width="1.500"/><rect x="755" y="757" width="15" height="3" fill="#333"/>
          <path d="M689 728L697 718M756 728L748 718" stroke="#333" stroke-width="2"/>
          <path d="M671 580C671 570 700 563 721 563C745 563 772 570 772 580V705C772 715 745 722 721 722C697 722 671 715 671 705Z" fill="url(#metal)" stroke="#444" stroke-width="1"/>
          <path d="M671 580H772M671 589H772" stroke="#333" stroke-width="1"/>
          <rect x="714" y="578" width="13" height="14" fill="#dedede" stroke="#888" stroke-width=".5"/>
          <rect x="702" y="565" width="35" height="9" fill="#fff"/><rect x="702" y="574" width="35" height="4" fill="#c8c8c8"/><text class="val" x="736" y="572.500">99,99</text><use href="#bi" x="697" y="568"/><use href="#hand" x="704" y="561"/>
          <rect x="690" y="592" width="59" height="38" fill="#c8c8c8" stroke="#333" stroke-width=".8"/>
          <text class="tk" x="719.500" y="604">TK PULMON</text><text class="tk" x="719.500" y="615">102</text><text class="tk" x="719.500" y="626">VS-10110</text>
          <rect x="756" y="594" width="11" height="24" fill="#a8a8a8" stroke="#444" stroke-width=".6"/><rect x="756" y="618" width="11" height="75" fill="#e00000"/>
          <rect x="703" y="634" width="40" height="22" fill="#c6c6c6"/><rect x="703" y="634" width="40" height="7" fill="#cecece"/><text class="tg" x="727" y="640">LT-10110/LT</text><rect x="703" y="641" width="8" height="7" fill="#ddd" stroke="#777" stroke-width=".4"/><rect x="703" y="649" width="40" height="7.500" fill="#fff"/><text class="val" x="742" y="655.500">76,08</text>
          <rect x="690" y="657" width="65" height="14" fill="#c6c6c6"/><text class="tg" x="729" y="662.500">LT-10110/WT</text><rect x="700" y="663" width="40" height="8" fill="#fff"/><text class="val" x="739" y="670">1898,87</text>
          <path d="M702 682l12-4h12l10-3M708 683h22" stroke="#222" fill="none"/><rect x="715" y="672" width="7" height="10" fill="#ddd" stroke="#333" stroke-width=".7"/>
          <circle cx="722" cy="700" r="14" fill="#c8c8c8" stroke="#888" stroke-dasharray="2 1"/><circle cx="722" cy="700" r="9" fill="#aaa" stroke="#777"/><circle cx="722" cy="700" r="4" fill="#bbb" stroke="#777"/>

          <!-- stray marks / pointer -->
          <rect x="655.500" y="626" width="2" height="2" fill="#111"/><rect x="654.500" y="634.500" width="3.500" height="3.500" fill="#000"/>
          <path d="M763 673v12l3-3 2 4 2-1-2-4h3z" fill="#fff" stroke="#333" stroke-width=".5"/>

          <!-- activation mark & tab -->
          <text class="wm" x="1147" y="838">Activar Windows</text>
          <text class="wm2" x="1147" y="850">Ve a Configuración para activar Windows.</text>
          <path d="M1240 869V856Q1240 853 1243 853H1349V869Z" fill="#c5d5e4"/><path d="M1247 865l3-6 3 5-3-2z" fill="#2a70b8"/><text class="tab" x="1256" y="866">Traza_VS13100</text>
        </svg>

        <div class="hmi-foot">
          <div class="fb"><svg viewBox="0 0 20 22"><path d="M2 1l16 10L2 21z" fill="#3ccc2c" stroke="#196a10"/></svg></div>
          <div class="fb g28"><svg viewBox="0 0 22 22"><circle cx="5" cy="6" r="3.500" fill="none" stroke="#d8a820" stroke-width="2"/><path d="M8 6h12v3h-3v2h-3V9H8z" fill="#e8c030"/><path d="M9 11v9M6 20h6" stroke="#777" stroke-width="2"/></svg></div>
          <div class="fb g17"><svg viewBox="0 0 22 22"><rect x="4" y="4" width="16" height="16" fill="#f4e0b0" stroke="#999"/><path d="M4 9h16M4 14h16M9 4v16M14 4v16" stroke="#e0a040"/><path d="M6 0l2 3 3 .5-2 2 .5 3L6 7 3 8.500l.5-3-2-2L5 3z" fill="#fc3"/></svg></div>
          <div class="fb g18"><svg viewBox="0 0 22 22"><rect x="3" y="1" width="13" height="18" fill="#d8e080" stroke="#445"/><path d="M5 5h3M10 5h4M5 9h3M10 9h4M5 13h3" stroke="#284"/><rect x="9" y="11" width="12" height="8" fill="#ddd" stroke="#555"/><rect x="12" y="15" width="6" height="2" fill="#c33"/></svg></div>
          <div class="fb g17"><svg viewBox="0 0 24 22"><rect x="1" y="1" width="22" height="20" fill="#eee"/><path d="M2 14h20M2 7h20M8 2v18M16 2v18" stroke="#ccc"/><path d="M2 8l7 8 5-5 5 6 3-3" fill="none" stroke="#2050c0" stroke-width="1.400"/><path d="M2 17l7-7 5 3 8-9" fill="none" stroke="#d03030" stroke-width="1.400"/></svg></div>
          <div class="fb g24"><svg viewBox="0 0 22 22"><rect x="2" y="3" width="12" height="17" fill="#f8d8a0" stroke="#888"/><path d="M2 7h12M2 11h12M2 15h12M6 3v17M10 3v17" stroke="#6ba"/><rect x="15.500" y="1" width="4" height="15" rx="2" fill="#eef" stroke="#226"/><circle cx="17.500" cy="18" r="3" fill="#d22"/><path d="M17.500 9v8" stroke="#d22" stroke-width="1.500"/></svg></div>
          <div class="fb g17"><svg viewBox="0 0 22 22"><rect x="8" y="8" width="13" height="13" fill="#4aa8e8" stroke="#e0c040"/><rect x="3" y="5" width="10" height="10" fill="#f4f0c0" stroke="#c8a040"/><path d="M2 4h5V1l6 5-6 5V8H2z" fill="#2cb82c" stroke="#176"/></svg></div>
          <div class="fb g36"><svg viewBox="0 0 22 22"><path d="M2 11l9-9v5h9v8h-9v5z" fill="#48c030" stroke="#226a18"/></svg></div>
          <div class="fb g7"><svg viewBox="0 0 22 22"><path d="M11 2l9 9h-5v9H7v-9H2z" fill="#48c030" stroke="#226a18"/></svg></div>
          <div class="fb g7"><svg viewBox="0 0 22 22"><path d="M11 20l9-9h-5V2H7v9H2z" fill="#a4a4a4" stroke="#888"/></svg></div>
          <div class="fb g8"><svg viewBox="0 0 22 22"><path d="M20 11l-9-9v5H2v8h9v5z" fill="#8ec81c" stroke="#4c8818"/></svg></div>
          <div class="fb g34"><svg viewBox="0 0 22 22"><rect x="3" y="11" width="13" height="10" fill="#5aa8e0" stroke="#d8b040"/><path d="M18 12A7 7 0 0 0 10 3V0L4 5l6 5V7a3.500 3.500 0 0 1 4 5z" fill="#38b838" stroke="#176" stroke-width=".6"/></svg></div>
          <div class="fb g12"><svg viewBox="0 0 22 22"><rect x="6" y="11" width="13" height="10" fill="#aaa" stroke="#999"/><path d="M4 12a7 7 0 0 1 8-9V0l6 5-6 5V7a3.500 3.500 0 0 0-4 5z" fill="#999"/></svg></div>
          <div class="fb g18"><svg viewBox="0 0 24 22"><rect x="8" y="4" width="15" height="14" fill="#9cc8e8" stroke="#d8b040"/><rect x="11" y="7" width="9" height="8" fill="#f4f0c0"/><path d="M2 7h6V3l7 6-7 6v-4H2z" fill="#2cb82c" stroke="#176"/></svg></div>
          <div class="fb g11"><svg viewBox="0 0 24 22"><rect x="2" y="5" width="14" height="13" fill="#b8b8b8" stroke="#aaa"/><path d="M8 7h7V3l7 6-7 6v-4H8z" fill="#a8a8a8" stroke="#999"/></svg></div>
          <div class="fb g20"><svg viewBox="0 0 22 22"><rect x="4" y="1" width="15" height="12" fill="#dff" stroke="#2a70a8"/><rect x="7" y="4" width="14" height="12" fill="#bde" stroke="#2a70a8"/><path d="M1 11h7l2 2h6v8H1z" fill="#f0c840" stroke="#b88818"/></svg></div>
          <div class="fb g11"><svg viewBox="0 0 22 22"><rect x="4" y="1" width="15" height="12" fill="#dff" stroke="#2a70a8"/><rect x="7" y="4" width="14" height="12" fill="#bde" stroke="#2a70a8"/><rect x="1" y="11" width="10" height="10" fill="#2030c0"/><rect x="3" y="11" width="6" height="4" fill="#eee"/><rect x="3" y="17" width="6" height="4" fill="#eee"/></svg></div>
          <div class="fb g11"><svg viewBox="0 0 22 22"><rect x="4" y="1" width="15" height="12" fill="#dff" stroke="#2a70a8"/><rect x="7" y="4" width="14" height="12" fill="#bde" stroke="#2a70a8"/><path d="M2 12l8 9M10 12l-8 9" stroke="#e02020" stroke-width="2.400"/></svg></div>
          <div class="fb g22"><svg viewBox="0 0 22 22"><rect x="4" y="1" width="14" height="12" fill="#a8a8a8" stroke="#777"/><rect x="4" y="1" width="14" height="5" fill="#888"/><path d="M2 18h18" stroke="#999" stroke-width="2"/><ellipse cx="16" cy="18" rx="5" ry="2.500" fill="#ccc" stroke="#666"/></svg></div>
          <div class="fb g22"><svg viewBox="0 0 22 22"><rect x="2" y="9" width="12" height="11" fill="#5aa8e0" stroke="#d8b040"/><circle cx="14" cy="7" r="6.500" fill="#2a70d8" stroke="#d8e8f8"/><path d="M14 3.500v1.500M12.500 6.500H14.500v4M12.500 10.500h4" fill="none" stroke="#fff" stroke-width="1.200"/></svg></div>
          <div class="fb wide g25"><svg viewBox="0 0 38 22"><rect x="3" y="6" width="3" height="10" fill="#444"/><ellipse cx="9" cy="11" rx="4.500" ry="9.500" fill="#c89820" stroke="#754"/><path d="M16 5q4 6 0 12M20 3q4 8 0 16M24 4q3 5 0 11" fill="none" stroke="#3a70c8" stroke-width="1.500"/><path d="M24 15l3 4 8-9" fill="none" stroke="#30a030" stroke-width="2.400"/></svg></div>
          <div class="fb wide2 g20"><svg viewBox="0 0 38 22"><path d="M2 10l5 4 8-9-4 10 5 3 8-12-3 12 4 2 10-13" fill="none" stroke="#30a030" stroke-width="2.600"/></svg></div>
        </div>
      </article>
    </div>
  </section>

  <aside class="side">
    <div class="tile-main">
      <div class="avatar-big">FL</div>
      <div class="tile-name">Fabian Licastro</div>
    </div>
    <div class="tile-small"><div class="avatar-small">YR</div></div>
  </aside>
</main>

<footer class="taskbar">
  <div class="tb-apps">
    <div class="tb"><svg viewBox="0 0 30 30"><rect x="1" y="1" width="13.500" height="13.500" rx="1" fill="#3fb6f2"/><rect x="15.500" y="1" width="13.500" height="13.500" rx="1" fill="#1d9ae8"/><rect x="1" y="15.500" width="13.500" height="13.500" rx="1" fill="#1c8fe4"/><rect x="15.500" y="15.500" width="13.500" height="13.500" rx="1" fill="#0a76d4"/></svg></div>
    <div class="tb run"><svg viewBox="0 0 30 30"><path d="M1 3h11l3 3h14v23H1z" fill="#e0a410"/><rect x="1" y="8" width="28" height="21" fill="#fcd455"/><rect x="6" y="20" width="18" height="9" rx="1.500" fill="#1976c8"/><rect x="11" y="23" width="8" height="1.500" fill="#0c4a88"/></svg></div>
    <div class="tb run"><svg viewBox="0 0 30 30"><path d="M21 1l8 4v20l-8 4L9 18l-5 4-3-2 6-5-6-5 3-2 5 4z" fill="#1d7ed0"/><path d="M21 1l8 4v20l-8 4z" fill="#23a0e8"/><path d="M21 9v12l-7-6z" fill="#fff"/></svg></div>
    <div class="tb run"><svg viewBox="0 0 30 30"><circle cx="15" cy="15" r="14" fill="#f26a3a"/><path d="M20 5l4 3-7 6-1 8-3 3-1-6 2-8z" fill="#f8c8b0"/><path d="M9 24l4-9" stroke="#f8d8c8"/></svg></div>
    <div class="tb run"><svg viewBox="0 0 30 30"><rect x="1" y="1" width="28" height="28" fill="#28a8ea"/><circle cx="19" cy="9" r="3" fill="#fff"/><path d="M1 29V20l9-10 19 15v4z" fill="#143f8c"/><path d="M13 14l6 5 5-7 5 6v11H21z" fill="#5c78d8"/></svg></div>
    <div class="tb run"><svg viewBox="0 0 30 30"><path d="M15 2l4 1 1 3 4 1 2-1 3 6-2 2v4l2 2-3 6-3-1-3 2-1 3h-8l-1-3-3-2-3 1-3-6 2-2v-4L1 12l3-6 3 1 3-2 1-3z" fill="#6f7780"/><circle cx="15" cy="15" r="8" fill="#fff"/><circle cx="15" cy="15" r="6" fill="#0a5aa8"/></svg></div>
    <div class="tb run"><svg viewBox="0 0 30 30"><rect x="3" y="3" width="24" height="25" rx="1" fill="#58b4dc"/><path d="M3 28h24v2H3z" fill="#7a4a20"/><path d="M6 0v5M10 0v5M14 0v5M18 0v5M22 0v5" stroke="#0a5a88" stroke-width="1.500"/><path d="M8 10h14M8 15h14M8 20h14" stroke="#0a5a88" stroke-width="2"/></svg></div>
    <div class="tb run"><svg viewBox="0 0 30 30"><use href="#chrome" width="30" height="30"/></svg></div>
    <div class="tb run"><svg viewBox="0 0 30 30"><rect x="4" y="0" width="22" height="30" rx="2" fill="#5f6a76"/><rect x="7" y="3" width="16" height="6" fill="#3fd0f0"/><g fill="#ccd"><rect x="7" y="12" width="4.500" height="4"/><rect x="12.800" y="12" width="4.500" height="4"/><rect x="7" y="18" width="4.500" height="4"/><rect x="12.800" y="18" width="4.500" height="4"/><rect x="7" y="24" width="4.500" height="4"/><rect x="12.800" y="24" width="4.500" height="4"/></g><rect x="18.600" y="12" width="4.500" height="16" fill="#0a5aa8"/></svg></div>
    <div class="tb active"><svg viewBox="0 0 34 34"><circle cx="21" cy="9" r="5" fill="#7b83eb"/><circle cx="29" cy="11" r="4" fill="#5059c9"/><path d="M14 14h13v12a7 7 0 0 1-13 3z" fill="#7b83eb"/><path d="M25 15h8v9a5 5 0 0 1-8 3z" fill="#5059c9"/><rect x="3" y="12" width="15" height="15" rx="1.500" fill="#4b53bc"/><text class="tms" x="10.500" y="24">T</text><circle cx="28" cy="7" r="6.500" fill="#c50f2a" stroke="#f4f6fb"/></svg></div>
    <div class="tb run"><svg viewBox="0 0 30 30"><rect x="1" y="3" width="28" height="24" fill="#bbb"/><rect x="2" y="6" width="26" height="20" fill="#000"/><path d="M4 9l3 2-3 2M8 13h3" stroke="#ccc" fill="none"/></svg></div>
    <div class="tb run"><svg viewBox="0 0 30 30"><path d="M8 1c6-1 8 2 9 2s4-3 8-1 4 8 2 12-4 5-5 4c0 4-1 7-3 11-2 1-3-3-3-7-3 2-6 0-7-4-1-2-1-3-2-2 1 2-2 0-4-3C1 9 2 2 8 1z" fill="#336791" stroke="#fff" stroke-width=".8"/><path d="M11 3c-2 6 0 11 3 14M19 3c-3 5-3 10-2 14" stroke="#fff" fill="none" stroke-width=".8"/></svg></div>
  </div>
  <div class="tray">
    <svg class="chev" viewBox="0 0 16 10"><path d="M1 9l7-7 7 7" fill="none" stroke="#111" stroke-width="1.200"/></svg>
    <div class="mic-tile"><svg viewBox="0 0 18 22"><rect x="5.500" y="1" width="7" height="13" rx="3.500" fill="#fff"/><path d="M2.500 10a6.500 6.500 0 0 0 13 0M9 17v4" fill="none" stroke="#fff" stroke-width="1.300"/></svg></div>
    <span class="lang">ESP<br>INTL</span>
    <svg class="t-wifi" viewBox="0 0 20 16"><path d="M1 6a13 13 0 0 1 18 0M4 9a9 9 0 0 1 12 0M6.500 12a5 5 0 0 1 7 0" fill="none" stroke="#111" stroke-width="1.200"/><circle cx="10" cy="14.500" r="1.300" fill="#111"/></svg>
    <svg class="t-vol" viewBox="0 0 20 16"><path d="M1 5h3l5-4v14l-5-4H1z" fill="none" stroke="#222"/><path d="M12 4a5 5 0 0 1 0 8" fill="none" stroke="#333"/><path d="M15 2a8 8 0 0 1 0 12" fill="none" stroke="#aaa"/></svg>
    <svg class="t-bat" viewBox="0 0 20 16"><path d="M2 0v4M6 0v4" stroke="#111" stroke-width="1.500"/><path d="M0 4h8v3L5 10H3L0 7zM3 10h2v4H3z" fill="#111"/><rect x="6" y="3.500" width="12" height="10" fill="#fff" stroke="#111" stroke-width="1.300"/><rect x="8" y="5.500" width="8" height="6" fill="#222"/><rect x="18" y="6.500" width="2" height="4" fill="#111"/></svg>
    <span class="clock">4:08 PM<br>8/9/2022</span>
    <i class="badge">4</i>
  </div>
</footer>
</body>
</html>
```

FILE: styles.css
```css
* { box-sizing: border-box; }
html, body { margin: 0; height: 100%; }
body {
  width: 1920px; height: 1080px; overflow: hidden;
  display: flex; flex-direction: column;
  background: #1f1f1f; color: #fff;
  font-family: "Open Sans", "Liberation Sans", sans-serif;
}
.sprite { position: absolute; }
i { font-style: normal; display: block; }

/* Teams title bar */
.titlebar { height: 48px; flex: none; background: #0a0a0a; display: flex; align-items: center; justify-content: center; position: relative; border-bottom: 1px solid #000; }
.title { font-size: 16px; font-weight: 500; color: #f2f2f2; }
.win-ctrls { position: absolute; right: 17px; top: 14px; display: flex; gap: 34px; align-items: center; height: 20px; }
.win-ctrls svg { width: 16px; height: 18px; }

/* Teams call bar */
.callbar { height: 76px; flex: none; background: #262626; display: flex; align-items: center; padding: 0 25px 0 23px; }
.shield { width: 24px; height: 26px; margin-top: 2px; }
.timer { margin-left: 23px; margin-top: 2px; font-size: 15.500px; color: #eee; }
.req { margin-left: auto; width: 176px; height: 40px; background: #2b2b2b; border: 1px solid #5f5f5f; border-radius: 4px; color: #fff; font: 600 16px "Open Sans", sans-serif; margin-right: 9px; padding: 2px 0 0; }
.cb { width: 70px; height: 76px; display: flex; flex-direction: column; align-items: center; color: #b8b8b8; font-size: 13px; padding-top: 17px; }
.cb svg { width: 24px; height: 24px; flex: none; }
.cb span { margin-top: 6px; line-height: 18px; }
.cb.on { color: #f4f4f4; }
.sep { width: 1px; height: 40px; background: #4a4a4a; margin: 0 11px 0 9px; }
.sep2 { margin: 0 11px 0 10px; }
.leave { margin-left: 10px; width: 130px; height: 40px; background: #c4314b; border: 0; border-radius: 4px; color: #fff; font: 600 16px "Open Sans", sans-serif; display: flex; align-items: center; justify-content: center; gap: 8px; box-shadow: 0 1px 3px rgba(0,0,0,.5); padding: 2px 0 0; }
.leave svg { width: 24px; height: 14px; }

/* stage */
.stage { height: 896px; flex: none; display: flex; gap: 5px; padding: 8px 6px 6px; background: #1f1f1f; }
.share { width: 1602px; height: 880px; flex: none; display: flex; flex-direction: column; background: #000; }
.side { flex: 1; display: flex; flex-direction: column; height: 882px; }
.tile-main { flex: 1; display: flex; flex-direction: column; align-items: center; padding-top: 230px; }
.avatar-big { width: 206px; height: 206px; border-radius: 50%; background: #d6ebef; color: #233a44; display: flex; align-items: center; justify-content: center; font: 600 82px "Open Sans", sans-serif; }
.tile-name { margin-top: 19px; font-size: 14.500px; color: #e8e8e8; }
.tile-small { height: 166px; background: #333; display: flex; align-items: center; justify-content: center; }
.avatar-small { width: 70px; height: 70px; border-radius: 50%; background: #d6ebef; color: #263c46; display: flex; align-items: center; justify-content: center; font: 600 26px "Open Sans", sans-serif; }

/* outer VNC */
.vnc-title { height: 19px; background: #fff; border-bottom: 1px solid #c4c4c4; display: flex; align-items: center; color: #222; font-size: 9.800px; padding-left: 0; flex: none; }
.vnc-logo { width: 12px; height: 14px; margin: 0 3px 0 1px; }
.vnc-ctrls { margin-left: auto; display: flex; align-items: center; margin-right: 13px; }
.vnc-ctrls svg { width: 10px; height: 11px; margin-left: 28px; }
.c-min { width: 9px; height: 2px; background: #777; }
.vnc-tools { display: flex; align-items: center; background: #eeeeee; flex: none; }
.vnc-tools.outer { height: 24px; border-bottom: 2px solid #444; padding: 0 0 2px 2px; }
.ti { width: 15px; height: 15px; margin: 0 2px; flex: none; }
.ts { width: 1px; height: 15px; background: #999; margin: 0 3px; flex: none; }
.ctrl { font: 400 9px "Liberation Sans", sans-serif; color: #1a3a9c; margin: 0 3px; }
.alt { font: 400 9px "Liberation Sans", sans-serif; color: #1a8a3a; margin: 0 3px; }

/* remote desktop */
.desktop { flex: 1; position: relative; background: #000; overflow: hidden; }
.icons { position: absolute; left: 77px; top: 17px; display: grid; grid-template-columns: repeat(5, 72.500px); grid-auto-rows: 98px; filter: blur(.25px); }
.di { display: flex; flex-direction: column; align-items: center; text-align: center; color: #e8e8e8; font-size: 8.800px; line-height: 11.300px; font-family: "Noto Sans", sans-serif; white-space: nowrap; }
.di svg { width: 35px; height: 35px; flex: none; margin-bottom: 3px; }
.seven { font: 700 22px "Liberation Sans", sans-serif; fill: #19e0ea; text-anchor: middle; }
.sl { font: 700 14px "Liberation Sans", sans-serif; fill: #fff; text-anchor: middle; }
.sl2 { fill: #1a6a88; }
.lic { font: 400 11.500px "Liberation Sans", sans-serif; fill: #fff; }
.lic2 { font: 700 21px "Liberation Sans", sans-serif; fill: #8a9cd8; }
.pud { font: 400 8px "Liberation Sans", sans-serif; fill: #fff; }
.v20 { font: 700 8px "Liberation Sans", sans-serif; fill: #eef; text-anchor: middle; }
.vn { font: 700 8px "Liberation Serif", serif; fill: #111; text-anchor: middle; }

.remote-bar { position: absolute; left: 0; right: 0; bottom: 10px; height: 31px; display: flex; align-items: center; }
.r-start { position: absolute; left: 89px; top: 10px; width: 13px; height: 9px; }
.overlay-name { position: relative; margin: 4px 0 0 18px; font-size: 14px; color: #f0f0f0; width: 105px; flex: none; white-space: nowrap; }
.rb { flex: none; height: 18px; width: 18px; }
.r-search { width: 16px; height: 16px; }
.r-view { margin-left: 21px; width: 16px; }
.r-a { margin-left: 19px; }
.r-first { margin-left: 21px; }
.rb-active { margin-left: 8px; width: 36px; height: 30px; background: #3a3a3a; border-bottom: 2px solid #8ac4e8; display: flex; align-items: center; justify-content: center; }
.rb-active svg { width: 17px; height: 20px; }
.r-tray { margin-left: auto; display: flex; align-items: center; color: #ddd; font-size: 8.500px; line-height: 13px; width: 171px; padding-right: 0; margin-right: 64px; }
.rt { width: 10px; height: 7px; flex: none; margin-left: 1px; }
.rt-a { width: 12px; height: 12px; margin-left: 7px; }
.rt-b { width: 14px; height: 12px; margin-left: 3px; }
.rt-c { width: 14px; height: 12px; margin-left: 5px; }
.r-lang { text-align: center; width: 22px; margin-left: 4px; flex: none; }
.r-time { text-align: center; width: 56px; margin-left: 4px; flex: none; }
.r-line { width: 1px; height: 30px; background: #444; margin-left: 3px; flex: none; }
.watermark { position: absolute; left: 1255px; top: 725px; display: flex; flex-direction: column; color: #555; }
.watermark strong { font-weight: 400; font-size: 14.500px; line-height: 19px; color: #5a5a5a; }
.watermark span { font-size: 10px; line-height: 17px; color: #4a4a4a; }

/* SCADA window */
.hmi { position: absolute; left: 258px; top: 71px; width: 1086px; height: 658px; display: flex; flex-direction: column; background: #bfbfbf; border: 1px solid #3f9ad0; filter: blur(.3px); }
.hmi-title { height: 23px; flex: none; background: #fff; border-bottom: 1px solid #c8c8c8; display: flex; align-items: center; padding-left: 6px; font: 10px "Liberation Sans", sans-serif; color: #444; letter-spacing: .25px; }
.hmi-title .vnc-logo { margin-right: 4px; }
.hmi-ctrls { margin-left: auto; display: flex; align-items: center; margin-right: 12px; }
.hmi-ctrls svg { width: 9px; height: 9px; margin-left: 26px; }
.hmi-ctrls .c-min { width: 8px; height: 1.500px; background: #444; }
.c-max { width: 8px; height: 8px; border: 1px solid #333; margin-left: 26px; }
.vnc-tools.inner { height: 21px; padding-left: 4px; border-bottom: 1px solid #999; }
.inner .ti { margin: 0 1px; }
.inner .ts { margin: 0 2.750px; }
.inner .ctrl, .inner .alt { margin: 0 2px; }

.hmi-head { height: 97px; flex: none; display: flex; padding: 2px 4px 0 5px; border-bottom: 1px solid #888; box-shadow: inset 0 -2px 0 #e4e4e4; }
.hmi-left { width: 963px; flex: none; }
.alarm-row { display: flex; align-items: center; height: 14px; gap: 5px; }
.mini { width: 13px; height: 13px; flex: none; }
.mini-r { margin-left: -1px; }
.alarm-bar { margin-left: 15px; width: 894px; height: 14px; background: #f00; display: flex; color: #fff; font: 9.800px/14px "Liberation Sans", sans-serif; flex: none; overflow: hidden; }
.alarm-bar span { display: block; overflow: hidden; white-space: nowrap; border-right: 1px solid #e8c8c8; padding-left: 2px; flex: none; }
.c1 { width: 44px; } .c2 { width: 66px; } .c3 { width: 30px; } .c4 { width: 170px; letter-spacing: -.05px; } .c5 { width: 275px; letter-spacing: -.25px; }
.c6 { width: 33px; display: flex !important; align-items: center; } .c7 { width: 36px; } .c8 { width: 34px; } .alarm-bar .c9 { flex: 1; border-right: 0; }
.ad { width: 6px; height: 7px; background: #8c4; margin-right: 1px; }
.area-row { display: flex; gap: 25px; margin-top: 18px; height: 22px; position: relative; width: 963px; }
.area-row.first { margin-top: 9px; height: 23px; }
.area { display: flex; width: 461px; flex: none; }
.area-name { width: 338px; flex: none; display: flex; align-items: center; justify-content: center; font: 700 12.500px "Liberation Sans", sans-serif; color: #1a1a1a; background: linear-gradient(#cfcfcf, #f4f4f4 25%, #dcdcdc 60%, #b0b0b0); border: 1px solid #a4a4a4; letter-spacing: .2px; }
.area-name.active { background: linear-gradient(#7ff, #0ff 30%, #10f0f0 70%, #0cd8d8); border-color: #0bb; }
.sqs { display: flex; width: 97px; margin-left: 1px; flex: none; gap: 0; }
.sqs i { width: 19.200px; background: linear-gradient(#d8d8d8, #c0c0c0 50%, #b4b4b4); border: 1px solid #b0b0b0; }
.down { margin-left: 4px; width: 22px; background: #cfcfcf; border: 1px solid #b0b0b0; display: flex; align-items: center; justify-content: center; }
.down svg { width: 20px; height: 21px; }
.led { width: 12px; height: 12px; background: linear-gradient(#5f5, #0b2); border: 1px solid #082; margin: -4px 0 0 -22px; flex: none; }
.mini-low { margin: 16px 0 0 -22px; }

.hmi-side { width: 104px; margin-left: 8px; flex: none; display: flex; flex-direction: column; }
.datebox { height: 14px; background: #c8c8c8; border: 1px solid #888; border-right-color: #eee; border-bottom-color: #eee; font: 9.500px/12px "Liberation Sans", sans-serif; color: #333; padding-left: 1px; }
.siemens { margin-top: 3px; height: 22px; font: 700 24px/22px "Liberation Sans", sans-serif; color: #0a8282; letter-spacing: -.8px; }
.pcs { height: 22px; font: italic 700 25px/22px "Liberation Sans", sans-serif; color: #f4f400; text-align: right; padding-right: 5px; }
.userbox { margin-top: 18px; height: 14px; border: 1px solid #666; border-right-color: #eee; border-bottom-color: #eee; font: 8px/12px "Liberation Sans", sans-serif; text-align: center; color: #333; }

.canvas { flex: none; display: block; }
.p-blue, .p-red, .p-dark { fill: none; stroke-width: 2.200px; }
.p-blue { stroke: #4a4ac0; }
.p-red { stroke: #c4505c; }
.p-dark { stroke: #8e3c4c; }
.dots { fill: none; stroke: #333; stroke-width: 1px; stroke-dasharray: 1.500 1.500; }
.lbl { font: 9.400px "Liberation Sans", sans-serif; fill: #2a2a2a; }
.mid { text-anchor: middle; }
.tg { font: 6.800px "Liberation Sans", sans-serif; fill: #2a2a2a; text-anchor: middle; }
.tg.sm { font-size: 6.300px; }
.ga { font: 700 5.500px "Liberation Sans", sans-serif; fill: #022; text-anchor: middle; }
.ga-y { fill: #fc0; }
.val { font: 700 8.800px "Liberation Sans", sans-serif; fill: #111; text-anchor: end; }
.val-y { fill: #f4f000; }
.val-b { fill: #1a1ac8; }
.val-o { fill: #e06020; }
.unit { font: 5.500px "Liberation Sans", sans-serif; fill: #555; }
.panel { fill: #b8b8b8; stroke: #a2a2a2; stroke-width: .8px; }
.ph { font: 700 9.500px "Liberation Sans", sans-serif; fill: #222; text-anchor: middle; }
.cip { fill: url(#rb); stroke: #a00; stroke-width: .5px; }
.tx { font: 7.500px "Liberation Sans", sans-serif; fill: #333; text-anchor: middle; }
.sm7 { font-size: 6.800px; }
.ok { font: 700 7px "Liberation Sans", sans-serif; fill: #063; text-anchor: end; }
.batch { font: 700 9.500px "Liberation Sans", sans-serif; fill: #222; text-anchor: middle; }
.tk { font: 700 9px "Liberation Sans", sans-serif; fill: #111; text-anchor: middle; }
.dbox { fill: none; stroke: #666; stroke-width: .7px; stroke-dasharray: 1.500 1; }
.wm { font: 12px "Open Sans", sans-serif; fill: #afafaf; }
.wm2 { font: 8.500px "Open Sans", sans-serif; fill: #b2b2b2; }
.tab { font: 6.800px "Liberation Sans", sans-serif; fill: #445; }

.hmi-foot { flex: 1; display: flex; align-items: flex-start; padding: 4px 0 0 44px; border-top: 1px solid #e0e0e0; background: #bdbdbd; }
.fb { width: 27.300px; height: 28px; flex: none; background: linear-gradient(#dcdcdc, #c6c6c6); border: 1px solid #a8a8a8; display: flex; align-items: center; justify-content: center; }
.fb svg { width: 20px; height: 20px; }
.fb.wide { width: 48px; }
.fb.wide svg { width: 36px; }
.fb.wide2 { width: 49px; }
.fb.wide2 svg { width: 34px; }
.g7 { margin-left: 7px; } .g8 { margin-left: 8px; } .g11 { margin-left: 11px; } .g12 { margin-left: 12px; }
.g17 { margin-left: 17px; } .g18 { margin-left: 18px; } .g20 { margin-left: 20px; } .g22 { margin-left: 22px; }
.g24 { margin-left: 24px; } .g25 { margin-left: 25px; } .g28 { margin-left: 28px; } .g34 { margin-left: 34px; } .g36 { margin-left: 36px; }

/* Windows taskbar */
.taskbar { height: 60px; flex: none; background: #dce3f1; display: flex; align-items: stretch; color: #111; }
.tb-apps { display: flex; padding-left: 631px; }
.tb { width: 55px; height: 60px; position: relative; display: flex; align-items: center; justify-content: center; }
.tb svg { width: 29px; height: 29px; }
.tb.run::after { content: ""; position: absolute; bottom: 6px; left: 23.500px; width: 8px; height: 3px; border-radius: 2px; background: #6c7178; }
.tb.active { z-index: 0; }
.tb.active::before { content: ""; position: absolute; z-index: -1; left: 3px; width: 48px; top: 6px; bottom: 6px; background: #eef1fa; border-radius: 4px; box-shadow: 2px 0 0 #e6eaf6; }
.tb.active::after { content: ""; position: absolute; bottom: 6px; left: 17px; width: 19px; height: 4px; border-radius: 2px; background: #0078d4; }
.tb.active svg { width: 33px; height: 33px; }
.tray { margin-left: auto; display: flex; align-items: center; padding-right: 24px; }
.chev { width: 16px; height: 10px; margin-right: 7px; }
.mic-tile { width: 40px; height: 50px; background: #0067c0; border-radius: 3px; display: flex; align-items: center; justify-content: center; }
.mic-tile svg { width: 18px; height: 22px; }
.lang { width: 50px; margin-left: 2px; text-align: center; font-size: 14px; line-height: 20px; }
.t-wifi { width: 20px; height: 16px; margin-left: 13px; }
.t-vol { width: 20px; height: 16px; margin-left: 9px; }
.t-bat { width: 20px; height: 16px; margin-left: 11px; }
.clock { width: 83px; text-align: right; font-size: 14px; line-height: 20px; }
.badge { width: 20px; height: 20px; margin-left: 9px; border-radius: 50%; background: #0078d4; color: #fff; font-size: 13px; line-height: 20px; text-align: center; }
.tms { font: 700 11px "Liberation Sans", sans-serif; fill: #fff; text-anchor: middle; }
```
